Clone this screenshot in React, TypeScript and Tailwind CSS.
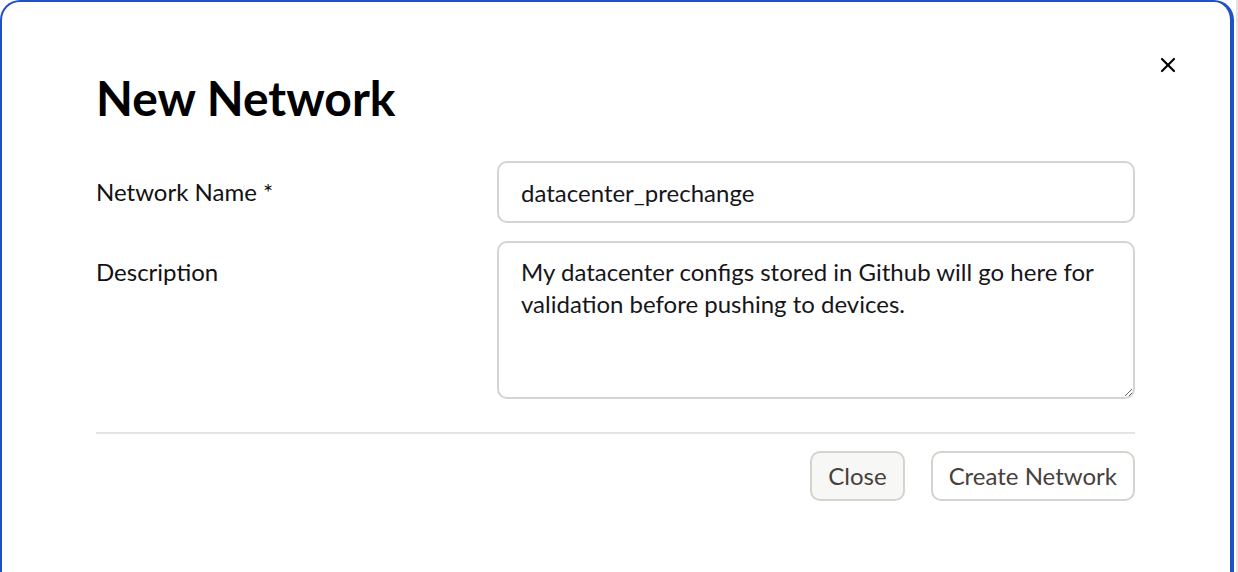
import { X } from "lucide-react";

export default function App() {
	return (
		<div className="flex h-[572px] w-full bg-white font-['Lato',sans-serif]">
			<div className="relative h-[600px] w-[1234px] rounded-t-[20px] border-l-2 border-r-4 border-t-2 border-[#2150c8] bg-white pl-[94px] pr-[95px] pt-[66px]">
				<button className="absolute right-[50px] top-[51px] text-black">
					<X size={24} strokeWidth={2.2} />
				</button>
				<h1 className="text-[48px] font-bold leading-[60px] text-black">
					New Network
				</h1>
				<div className="mt-[33px] flex flex-col gap-[18px]">
					<div className="flex items-center">
						<label className="w-[401px] shrink-0 text-[24px] leading-[32px] text-[#111]">
							Network Name *
						</label>
						<input
							className="h-[62px] flex-1 rounded-[10px] border-2 border-[#d3d3d8] px-[22px] text-[24px] text-[#16161a] outline-none"
							defaultValue="datacenter_prechange"
						/>
					</div>
					<div className="flex items-start">
						<label className="w-[401px] shrink-0 pt-[15px] text-[24px] leading-[32px] text-[#111]">
							Description
						</label>
						<textarea
							readOnly
							className="h-[158px] flex-1 rounded-[10px] border-2 border-[#d3d3d8] px-[22px] pt-[13px] text-[24px] leading-[32px] text-[#16161a] outline-none"
							defaultValue="My datacenter configs stored in Github will go here for validation before pushing to devices."
						/>
					</div>
				</div>
				<div className="mt-[33px] h-[2px] bg-[#e3e3e8]" />
				<div className="mt-[17px] flex justify-end gap-[26px]">
					<button className="h-[50px] rounded-[10px] border-2 border-[#d6d2ce] bg-[#f7f7f5] px-[16px] text-[24px] text-[#46413d]">
						Close
					</button>
					<button className="h-[50px] rounded-[10px] border-2 border-[#d6d2ce] bg-white px-[16px] text-[24px] text-[#46413d]">
						Create Network
					</button>
				</div>
			</div>
			<div className="w-[2px]" />
			<div className="flex-1 bg-[#e4e4e4]" />
		</div>
	);
}
